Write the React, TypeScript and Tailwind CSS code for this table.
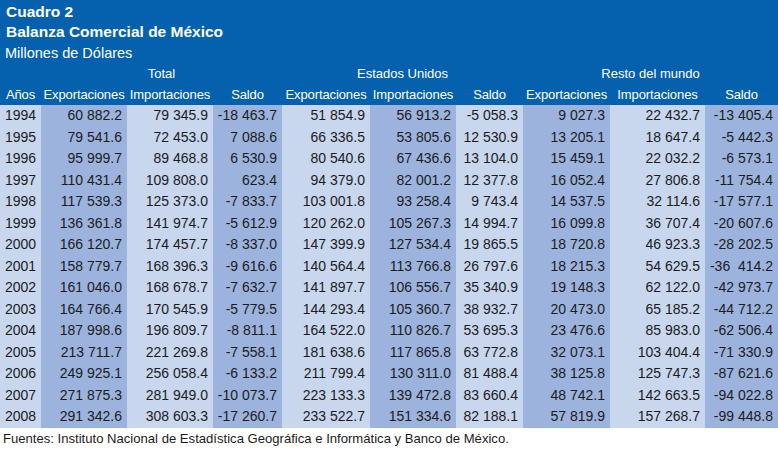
const rows: string[][] = [
  ["1994", "60 882.2", "79 345.9", "-18 463.7", "51 854.9", "56 913.2", "-5 058.3", "9 027.3", "22 432.7", "-13 405.4"],
  ["1995", "79 541.6", "72 453.0", "7 088.6", "66 336.5", "53 805.6", "12 530.9", "13 205.1", "18 647.4", "-5 442.3"],
  ["1996", "95 999.7", "89 468.8", "6 530.9", "80 540.6", "67 436.6", "13 104.0", "15 459.1", "22 032.2", "-6 573.1"],
  ["1997", "110 431.4", "109 808.0", "623.4", "94 379.0", "82 001.2", "12 377.8", "16 052.4", "27 806.8", "-11 754.4"],
  ["1998", "117 539.3", "125 373.0", "-7 833.7", "103 001.8", "93 258.4", "9 743.4", "14 537.5", "32 114.6", "-17 577.1"],
  ["1999", "136 361.8", "141 974.7", "-5 612.9", "120 262.0", "105 267.3", "14 994.7", "16 099.8", "36 707.4", "-20 607.6"],
  ["2000", "166 120.7", "174 457.7", "-8 337.0", "147 399.9", "127 534.4", "19 865.5", "18 720.8", "46 923.3", "-28 202.5"],
  ["2001", "158 779.7", "168 396.3", "-9 616.6", "140 564.4", "113 766.8", "26 797.6", "18 215.3", "54 629.5", "-36  414.2"],
  ["2002", "161 046.0", "168 678.7", "-7 632.7", "141 897.7", "106 556.7", "35 340.9", "19 148.3", "62 122.0", "-42 973.7"],
  ["2003", "164 766.4", "170 545.9", "-5 779.5", "144 293.4", "105 360.7", "38 932.7", "20 473.0", "65 185.2", "-44 712.2"],
  ["2004", "187 998.6", "196 809.7", "-8 811.1", "164 522.0", "110 826.7", "53 695.3", "23 476.6", "85 983.0", "-62 506.4"],
  ["2005", "213 711.7", "221 269.8", "-7 558.1", "181 638.6", "117 865.8", "63 772.8", "32 073.1", "103 404.4", "-71 330.9"],
  ["2006", "249 925.1", "256 058.4", "-6 133.2", "211 799.4", "130 311.0", "81 488.4", "38 125.8", "125 747.3", "-87 621.6"],
  ["2007", "271 875.3", "281 949.0", "-10 073.7", "223 133.3", "139 472.8", "83 660.4", "48 742.1", "142 663.5", "-94 022.8"],
  ["2008", "291 342.6", "308 603.3", "-17 260.7", "233 522.7", "151 334.6", "82 188.1", "57 819.9", "157 268.7", "-99 448.8"],
];

const heads = [
  "Años",
  "Exportaciones",
  "Importaciones",
  "Saldo",
  "Exportaciones",
  "Importaciones",
  "Saldo",
  "Exportaciones",
  "Importaciones",
  "Saldo",
];

const cols = "grid grid-cols-[41px_86px_86px_69px_88px_86px_67px_87px_95px_73px]";

export default function App() {
  return (
    <div className="w-[778px] h-[450px] bg-white text-[#1c1c1c] font-['Liberation_Sans',Arial,sans-serif]">
      <div className="bg-[#0561ae] text-white">
        <div className="h-[21px] pl-[6px] text-[15.5px] font-bold leading-[24px]">Cuadro 2</div>
        <div className="h-[21px] pl-[6px] text-[15.5px] font-bold leading-[22px]">Balanza Comercial de México</div>
        <div className="h-[21px] pl-[5px] text-[14.5px] leading-[22px]">Millones de Dólares</div>
        <div className={`${cols} h-[21px] text-[13px] leading-[22px]`}>
          <div />
          <div className="col-span-3 text-center">Total</div>
          <div className="col-span-3 text-center">Estados Unidos</div>
          <div className="col-span-3 text-center">Resto del mundo</div>
        </div>
        <div className={`${cols} h-[21px] text-[13px] leading-[21px]`}>
          {heads.map((h, i) => (
            <div key={i} className="text-center whitespace-nowrap tracking-[-0.1px]">
              {h}
            </div>
          ))}
        </div>
      </div>
      <div className={`${cols} text-[14px]`}>
        {rows.map((r) =>
          r.map((v, i) => (
            <div
              key={r[0] + i}
              className={`h-[21.5px] leading-[21.5px] whitespace-pre ${
                i % 2 === 0 ? "bg-[#c8d6ee]" : "bg-[#9cb3dd]"
              } ${i === 0 ? "text-center" : "text-right pr-[5px]"}`}
            >
              {v}
            </div>
          ))
        )}
      </div>
      <div className="pl-[3px] text-[13.1px] leading-[22px]">
        Fuentes: Instituto Nacional de Estadística Geográfica e Informática y Banco de México.
      </div>
    </div>
  );
}
